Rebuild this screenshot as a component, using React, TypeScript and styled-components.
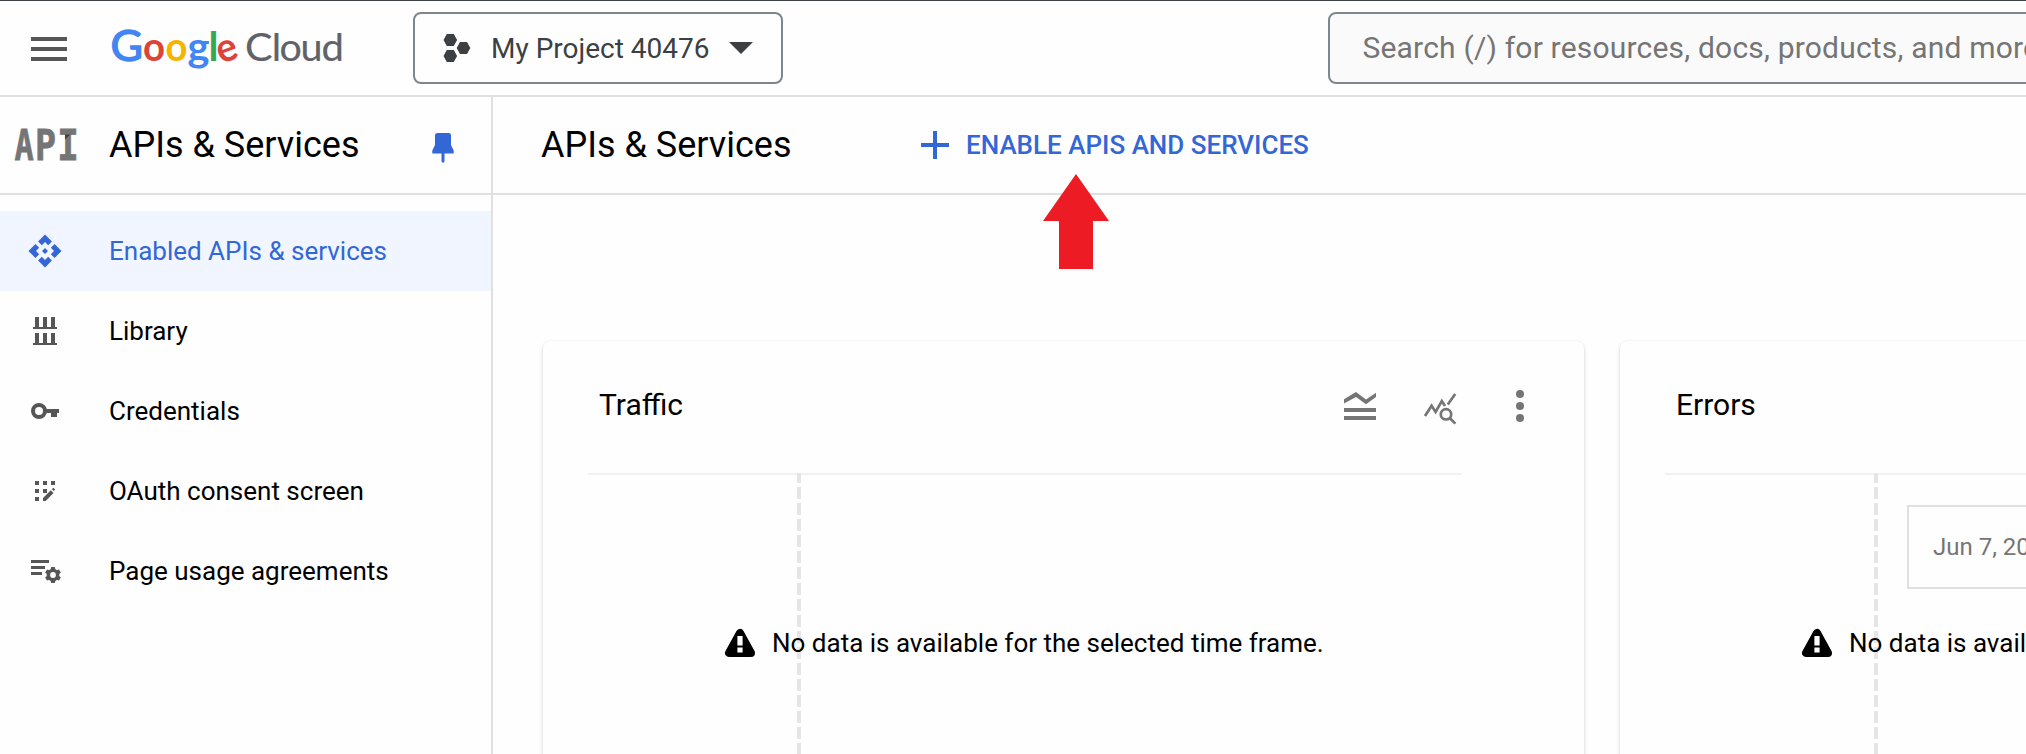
import React from 'react';
import styled, { createGlobalStyle, css } from 'styled-components';

const GlobalStyle = createGlobalStyle`
  * { box-sizing: border-box; }
  body {
    margin: 0;
    overflow: hidden;
    background: #fefefe;
    color: #000;
    font-family: Roboto, "Liberation Sans", sans-serif;
  }
  svg { display: block; flex: none; overflow: visible; }
`;

const blue = '#3367d6';
const divider = '#e0e0e0';

const Page = styled.div`
  display: flex;
  flex-direction: column;
  width: 100%;
  height: 754px;
  overflow: hidden;
  border-top: 1px solid #3c4043;
`;

const TopBar = styled.header`
  display: flex;
  align-items: center;
  flex: none;
  height: 96px;
  padding-left: 25px;
  border-bottom: 2px solid ${divider};
`;

const MenuButton = styled.div`
  padding-top: 2px;
`;

const Brand = styled.div`
  margin: 0 65px 0 35px;
`;

const ProjectPicker = styled.button`
  display: flex;
  align-items: center;
  flex: none;
  width: 370px;
  height: 72px;
  padding: 0 28px 0 27px;
  border: 2px solid #80868b;
  border-radius: 8px;
  background: transparent;
  color: #3c4043;
  font: 400 28px Roboto, sans-serif;
`;

const PickerLabel = styled.span`
  flex: 1;
  margin-left: 19px;
  text-align: left;
  white-space: nowrap;
`;

const SearchBox = styled.div`
  display: flex;
  align-items: center;
  flex: none;
  width: 1100px;
  height: 72px;
  margin-left: 545px;
  padding: 0 0 2px 32.5px;
  border: 2px solid #80868b;
  border-radius: 8px;
  background: #fafafa;
  color: #757575;
  font-size: 30px;
  letter-spacing: 0.19px;
  white-space: nowrap;
`;

const Body = styled.div`
  display: flex;
  flex: 1;
  min-height: 0;
`;

const Sidebar = styled.nav`
  flex: none;
  width: 493px;
  border-right: 2px solid ${divider};
`;

const SidebarHead = styled.div`
  display: flex;
  align-items: center;
  height: 98px;
  padding: 0 36px 0 15px;
  border-bottom: 2px solid ${divider};
`;

const Title = styled.h1`
  margin: 0;
  font-size: 36px;
  font-weight: 400;
  line-height: 42px;
  white-space: nowrap;
`;

const SidebarTitle = styled(Title)`
  flex: 1;
  margin-left: 32px;
`;

const PinButton = styled.div`
  padding-top: 3px;
`;

const NavList = styled.div`
  padding-top: 16px;
`;

const NavItem = styled.a<{ $active?: boolean }>`
  display: flex;
  align-items: center;
  gap: 46px;
  height: 80px;
  padding-left: 27px;
  font-size: 26px;
  color: #000;
  svg { color: #565656; }
  ${p => p.$active && css`
    background: #f0f5ff;
    color: ${blue};
    svg { color: ${blue}; }
  `}
`;

const Main = styled.main`
  flex: 1;
  min-width: 0;
  overflow: hidden;
`;

const MainHead = styled.div`
  position: relative;
  display: flex;
  align-items: center;
  height: 98px;
  padding-left: 48px;
  border-bottom: 2px solid ${divider};
`;

const EnableButton = styled.button`
  display: flex;
  align-items: center;
  gap: 17px;
  margin-left: 129.5px;
  padding: 0;
  border: 0;
  background: none;
  color: ${blue};
  font: 500 26px Roboto, sans-serif;
  white-space: nowrap;
`;

const Pointer = styled.svg`
  position: absolute;
  left: 550px;
  top: 77px;
`;

const Cards = styled.div`
  display: flex;
  gap: 36px;
  padding: 146px 0 0 50px;
`;

const Card = styled.section`
  flex: none;
  width: 1041px;
  height: 480px;
  border-radius: 8px;
  background: #fefefe;
  box-shadow: 0 2px 4px rgba(0, 0, 0, 0.16), 0 0 2px rgba(0, 0, 0, 0.05);
`;

const CardHead = styled.div`
  display: flex;
  align-items: center;
  height: 132px;
  padding: 0 44px 2px 56px;
`;

const CardTitle = styled.h2`
  flex: 1;
  margin: 0;
  padding-bottom: 3px;
  font-size: 30px;
  font-weight: 400;
`;

const CardTools = styled.div`
  display: flex;
  gap: 40px;
  color: #757575;
`;

const Chart = styled.div`
  position: relative;
  width: 874px;
  height: 300px;
  margin-left: 45px;
  border-top: 2px solid #f1f1f1;
`;

const TimeMarker = styled.div`
  width: 4px;
  height: 300px;
  margin: -2px 0 0 209px;
  background: repeating-linear-gradient(#e5e5e5 0 12px, transparent 12px 16px) 0 -2px;
  background-size: 4px 320px;
`;

const Notice = styled.div`
  position: absolute;
  left: 137px;
  top: 153px;
  display: flex;
  align-items: center;
  gap: 17px;
  font-size: 26px;
  line-height: 30px;
  white-space: nowrap;
`;

const DateTip = styled.div`
  position: absolute;
  left: 242px;
  top: 30px;
  display: flex;
  align-items: center;
  width: 300px;
  height: 84px;
  padding-left: 24px;
  border: 2px solid #e0e0e0;
  background: #fefefe;
  color: #757575;
  font-size: 24px;
`;

const MenuIcon = () => (
  <svg width="48" height="48" viewBox="0 0 24 24" fill="#565656">
    <path d="M3 18h18v-2H3v2zm0-5h18v-2H3v2zm0-7v2h18V6H3z" />
  </svg>
);

const logoLetters = [
  { c: 'G', x: 2.5, w: 32.5, size: 42.5, weight: 400, fill: '#4285f4', edge: 1.3 },
  { c: 'o', x: 35, w: 22, size: 40, weight: 700, fill: '#db4437', edge: 0 },
  { c: 'o', x: 57.5, w: 22, size: 40, weight: 700, fill: '#f4b400', edge: 0 },
  { c: 'g', x: 79.5, w: 22, size: 40, weight: 700, fill: '#4285f4', edge: 0 },
  { c: 'l', x: 100.5, w: 10, size: 40, weight: 700, fill: '#34a853', edge: 0 },
  { c: 'e', x: 109, w: 20.5, size: 40, weight: 700, fill: '#db4437', edge: 0, tilt: -20 },
  { c: 'C', x: 137, w: 27.5, size: 39.5, weight: 400, fill: '#5f6368', edge: 0.2 },
  { c: 'l', x: 163.8, w: 9.4, size: 38.5, weight: 400, fill: '#5f6368', edge: 0.2 },
  { c: 'o', x: 171.6, w: 22.3, size: 38.5, weight: 400, fill: '#5f6368', edge: 0.2 },
  { c: 'u', x: 192.4, w: 22, size: 38.5, weight: 400, fill: '#5f6368', edge: 0.2 },
  { c: 'd', x: 213.4, w: 22.4, size: 38.5, weight: 400, fill: '#5f6368', edge: 0.2 },
];

const CloudLogo = () => (
  <svg width="240" height="52" viewBox="0 0 240 52" fontFamily="Lato, sans-serif">
    {logoLetters.map((l, i) => (
      <text
        key={i}
        x={l.x}
        y={39}
        fontSize={l.size}
        fontWeight={l.weight}
        fill={l.fill}
        stroke={l.fill}
        strokeWidth={l.edge}
        textLength={l.w}
        lengthAdjust="spacingAndGlyphs"
        transform={l.tilt ? `rotate(${l.tilt} ${l.x + l.w / 2} 29)` : undefined}
      >
        {l.c}
      </text>
    ))}
  </svg>
);

const HexIcon = () => (
  <svg width="30" height="32" viewBox="0 0 30 32" fill="#3c4043">
    {[[8.3, 8], [21.5, 16], [8.3, 24]].map(([x, y]) => (
      <path key={`${x}-${y}`} d={`M${x - 6.8} ${y}l3.3 -6h7l3.3 6l-3.3 6h-7z`} />
    ))}
  </svg>
);

const CaretIcon = () => (
  <svg width="24" height="12" viewBox="0 0 24 12" fill="#3c4043"><path d="M0 0h24L12 12z" /></svg>
);

const apiLetters: [string, number, number][] = [['A', -0.6, 19.2], ['P', 20, 21], ['I', 42.2, 21.6]];

const ApiProductIcon = () => (
  <svg width="62" height="34" viewBox="0 0 62 34" fontFamily="'DejaVu Sans Mono', monospace">
    {apiLetters.map(([c, x, w]) => (
      <text
        key={c}
        x={x}
        y="32.2"
        fontSize="43"
        fontWeight="700"
        fill="#757575"
        stroke="#757575"
        strokeWidth="0.8"
        textLength={w}
        lengthAdjust="spacingAndGlyphs"
      >
        {c}
      </text>
    ))}
    <path d="M50 6.500h5.500l-5.500 5z" fill="#424242" />
  </svg>
);

const PinIcon = () => (
  <svg width="24" height="32" viewBox="0 0 24 32" fill={blue}>
    <path d="M6.500 2h11Q20 2 20 4.500V14l2.700 5.500V22.500H13.500v8L12 32l-1.500-1.500V22.500H1.300v-3L4 14V4.500Q4 2 6.500 2z" />
  </svg>
);

const PlusIcon = () => (
  <svg width="28" height="28" viewBox="0 0 28 28" fill="currentColor"><path d="M12 0h4v12h12v4H16v12h-4V16H0v-4h12z" /></svg>
);

const ApiIcon = () => (
  <svg width="36" height="36" viewBox="0 0 24 24" fill="currentColor">
    <path d="M14 12l-2 2-2-2 2-2 2 2zm-2-6l2.120 2.120 2.500-2.500L12 1 7.380 5.620l2.500 2.500L12 6zm-6 6l2.120-2.120-2.500-2.500L1 12l4.620 4.620 2.500-2.500L6 12zm12 0l-2.120 2.120 2.500 2.500L23 12l-4.620-4.620-2.500 2.500L18 12zm-6 6l-2.120-2.120-2.500 2.500L12 23l4.620-4.620-2.500-2.500L12 18z" />
  </svg>
);

const LibraryIcon = () => (
  <svg width="36" height="36" viewBox="0 0 36 36" fill="currentColor">
    {[4, 20].map(y => (
      <path key={y} d={`M8 ${y}h4v10h4v-10h4v10h4v-10h4v10h2v2h-24v-2h2z`} />
    ))}
  </svg>
);

const KeyIcon = () => (
  <svg width="36" height="36" viewBox="0 0 36 36" fill="currentColor">
    <circle cx="12" cy="18" r="6" fill="none" stroke="currentColor" strokeWidth="4" />
    <path d="M18 16h14v4h-2v4h-6v-4h-6z" />
  </svg>
);

const ConsentIcon = () => (
  <svg width="36" height="36" viewBox="0 0 36 36" fill="currentColor">
    <path d="M8 8h4v4H8zM16 8h4v4h-4zM24 8h4v4h-4zM8 16h4v4H8zM16 16h4v4h-4zM8 24h4v4H8z" />
    <path d="M16 28v-3l7.800-7.800 2.700 2.700L18.700 28zM24.800 16.200l1.500-1.500 1.900 1.900-1.500 1.500z" />
  </svg>
);

const AgreementsIcon = () => (
  <svg width="36" height="36" viewBox="0 0 36 36" fill="currentColor">
    <path d="M4 7h18v3H4zM4 13h14v3H4zM4 19h11v3H4z" />
    <circle cx="26" cy="22" r="4.600" fill="none" stroke="currentColor" strokeWidth="3.400" />
    {[0, 60, 120, 180, 240, 300].map(a => (
      <path key={a} d="M24.200 14h3.600l.8 3.500h-5.200z" transform={`rotate(${a} 26 22)`} />
    ))}
  </svg>
);

const LegendIcon = () => (
  <svg width="40" height="40" viewBox="0 0 40 40" fill="currentColor">
    <path d="M4 13.300L16 6l10 7.500L36 6.700v4.200L26 18.200l-10-7.300L4 17.500zM4 22h32v4H4zM4 30h32v4H4z" />
  </svg>
);

const QueryStatsIcon = () => (
  <svg width="40" height="40" viewBox="0 0 40 40" fill="none" stroke="currentColor" strokeWidth="2.700">
    <path d="M5 30l6.600-10.200 4 6.200 6.200-11 3.200 5M35.200 8l-7.400 10.600" />
    <circle cx="26" cy="28.300" r="5.200" />
    <path d="M29.600 32l5.800 5.600" />
  </svg>
);

const MoreIcon = () => (
  <svg width="40" height="40" viewBox="0 0 40 40" fill="currentColor">
    <circle cx="20" cy="8" r="4" /><circle cx="20" cy="20" r="4" /><circle cx="20" cy="32" r="4" />
  </svg>
);

const WarningIcon = () => (
  <svg width="30" height="28" viewBox="0 0 30 28">
    <path d="M4 24h22L15 4z" stroke="#000" strokeWidth="8" strokeLinejoin="round" />
    <path d="M12.400 7h5.200v9.500h-5.200zM12.400 18.400h5.200v5.200h-5.200z" fill="#fff" />
  </svg>
);

const navItems = [
  { label: 'Enabled APIs & services', Icon: ApiIcon, active: true },
  { label: 'Library', Icon: LibraryIcon },
  { label: 'Credentials', Icon: KeyIcon },
  { label: 'OAuth consent screen', Icon: ConsentIcon },
  { label: 'Page usage agreements', Icon: AgreementsIcon },
];

const MetricCard = ({ title, date }: { title: string; date?: string }) => (
  <Card>
    <CardHead>
      <CardTitle>{title}</CardTitle>
      <CardTools>
        <LegendIcon />
        <QueryStatsIcon />
        <MoreIcon />
      </CardTools>
    </CardHead>
    <Chart>
      <TimeMarker />
      <Notice>
        <WarningIcon />
        No data is available for the selected time frame.
      </Notice>
      {date && <DateTip>{date}</DateTip>}
    </Chart>
  </Card>
);

export default function App() {
  return (
    <Page>
      <GlobalStyle />
      <TopBar>
        <MenuButton><MenuIcon /></MenuButton>
        <Brand><CloudLogo /></Brand>
        <ProjectPicker>
          <HexIcon />
          <PickerLabel>My Project 40476</PickerLabel>
          <CaretIcon />
        </ProjectPicker>
        <SearchBox>Search (/) for resources, docs, products, and more</SearchBox>
      </TopBar>
      <Body>
        <Sidebar>
          <SidebarHead>
            <ApiProductIcon />
            <SidebarTitle as="h2">APIs &amp; Services</SidebarTitle>
            <PinButton><PinIcon /></PinButton>
          </SidebarHead>
          <NavList>
            {navItems.map(({ label, Icon, active }) => (
              <NavItem key={label} $active={active}>
                <Icon />
                {label}
              </NavItem>
            ))}
          </NavList>
        </Sidebar>
        <Main>
          <MainHead>
            <Title>APIs &amp; Services</Title>
            <EnableButton>
              <PlusIcon />
              ENABLE APIS AND SERVICES
            </EnableButton>
            <Pointer width="66" height="95" viewBox="0 0 66 95" fill="#ed1c24">
              <path d="M33 0l33 47H50v48H16V47H0z" />
            </Pointer>
          </MainHead>
          <Cards>
            <MetricCard title="Traffic" />
            <MetricCard title="Errors" date="Jun 7, 2023" />
          </Cards>
        </Main>
      </Body>
    </Page>
  );
}
